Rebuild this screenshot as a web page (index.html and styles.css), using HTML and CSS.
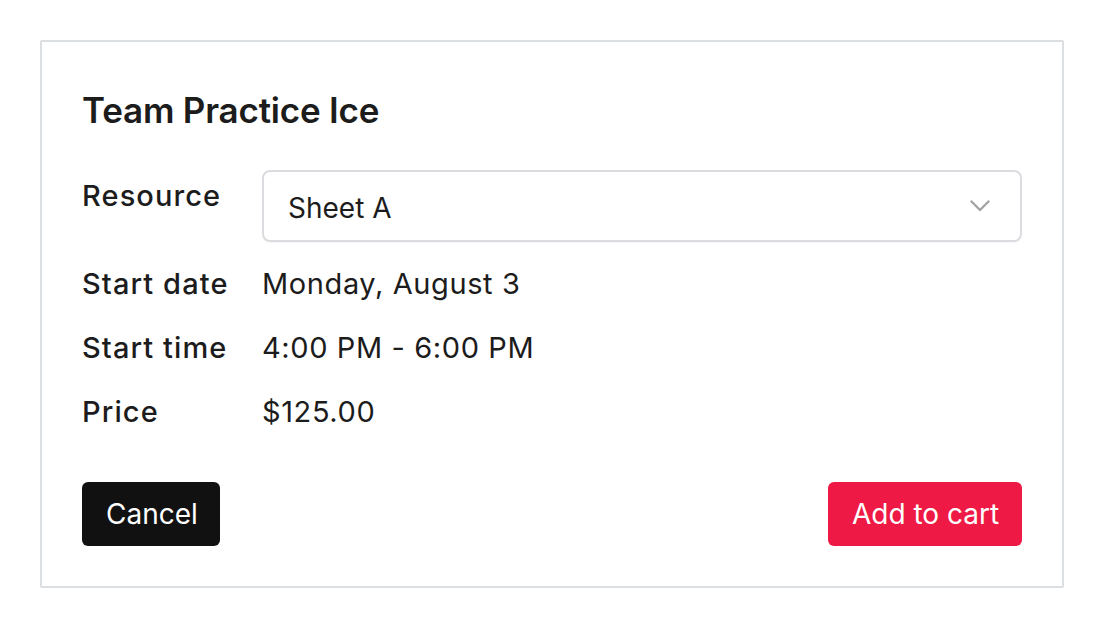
FILE: index.html
```html
<!doctype html>
<html lang="en">
  <head>
    <meta charset="UTF-8" />
    <meta name="viewport" content="width=device-width, initial-scale=1.0" />
    <title>Team Practice Ice</title>
    <link rel="stylesheet" href="styles.css">
  </head>
  <body>
    <div class="dialog">
      <h2 class="dialog-title">Team Practice Ice</h2>

      <div class="details">
        <!-- Resource picker -->
        <div class="label label-select">Resource</div>
        <div class="select">
          <span>Sheet A</span>
          <svg class="chevron" width="20" height="12" viewBox="0 0 20 12" fill="none">
            <path d="M1.5 1.5 L10 10 L18.5 1.5" stroke="#a3a3a3" stroke-width="2.4" stroke-linecap="round" stroke-linejoin="round" />
          </svg>
        </div>

        <div class="label">Start date</div>
        <div class="value">Monday, August 3</div>

        <div class="label">Start time</div>
        <div class="value">4:00 PM - 6:00 PM</div>

        <div class="label">Price</div>
        <div class="value">$125.00</div>
      </div>

      <div class="actions">
        <button class="btn btn-dark">Cancel</button>
        <button class="btn btn-primary">Add to cart</button>
      </div>
    </div>
  </body>
</html>
```

FILE: styles.css
```css
* {
  margin: 0;
  padding: 0;
  box-sizing: border-box;
}

body {
  font-family: Inter, 'Noto Sans', sans-serif;
  background: white;
  color: #1c1c1c;
  padding: 40px;
}

.dialog {
  width: 1024px;
  height: 548px;
  background: white;
  border: 2px solid #dcdfe2;
  border-radius: 2px;
  padding: 40px;
  display: flex;
  flex-direction: column;
}

.dialog-title {
  font-size: 35px;
  line-height: 56px;
  font-weight: 600;
  letter-spacing: -0.2px;
  margin-bottom: 32px;
}

.details {
  display: grid;
  grid-template-columns: 180px 1fr;
  row-gap: 24px;
  font-size: 29px;
  line-height: 40px;
  letter-spacing: 0.6px;
}

.label {
  font-weight: 500;
  letter-spacing: 1.1px;
}

.label-select {
  padding-top: 6px;
}

.select {
  display: flex;
  align-items: center;
  justify-content: space-between;
  height: 72px;
  margin-bottom: -2px;
  border: 2px solid #dadce0;
  border-radius: 8px;
  padding: 4px 30px 0 24px;
  font-size: 28px;
  letter-spacing: 0;
  box-shadow: 0 1px 2px rgba(0, 0, 0, 0.04);
}

.chevron {
  margin-top: -4px;
}

.actions {
  display: flex;
  justify-content: space-between;
  margin-top: 50px;
}

.btn {
  font-family: inherit;
  font-size: 28px;
  line-height: 40px;
  height: 64px;
  padding: 0 24px;
  border: none;
  border-radius: 6px;
  color: white;
  white-space: nowrap;
  cursor: pointer;
}

.btn-dark {
  background: #111111;
  width: 138px;
}

.btn-primary {
  background: #ee1944;
  width: 194px;
}
```
